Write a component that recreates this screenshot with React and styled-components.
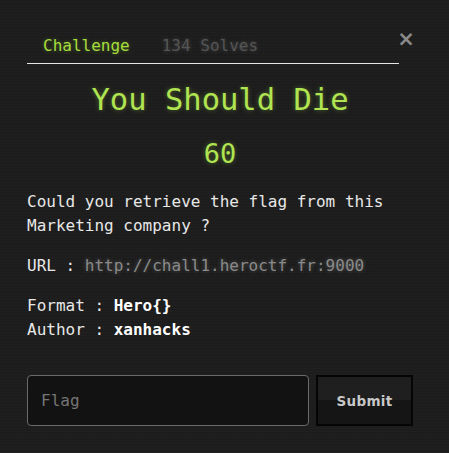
import React from 'react';
import styled, { createGlobalStyle } from 'styled-components';

const GlobalStyle = createGlobalStyle`
  html, body {
    margin: 0;
    padding: 0;
    background-color: #1d1d1d;
    background-image:
      repeating-linear-gradient(0deg, rgba(255, 255, 255, 0.012) 0 1px, transparent 1px 3px),
      repeating-linear-gradient(90deg, rgba(0, 0, 0, 0.05) 0 1px, transparent 1px 3px);
  }

  body {
    font-family: 'DejaVu Sans Mono', monospace;
    color: #e8e8e8;
  }
`;

const challenge = {
  name: 'You Should Die',
  value: 60,
  solves: 134,
  url: 'http://chall1.heroctf.fr:9000',
  format: 'Hero{}',
  author: 'xanhacks',
};

const App = () => {
  return (
    <>
      <GlobalStyle />
      <Modal>
        <Header>
          <Tabs>
            <Tab active>Challenge</Tab>
            <Tab>{challenge.solves} Solves</Tab>
          </Tabs>
          <CloseButton aria-label="Close">×</CloseButton>
        </Header>

        <Title>{challenge.name}</Title>
        <Points>{challenge.value}</Points>

        <Description>
          <p>
            Could you retrieve the flag from this
            <br />
            Marketing company ?
          </p>
          <p>
            URL : <Link>{challenge.url}</Link>
          </p>
          <p>
            Format : <strong>{challenge.format}</strong>
            <br />
            Author : <strong>{challenge.author}</strong>
          </p>
        </Description>

        <FlagForm onSubmit={e => e.preventDefault()}>
          <FlagInput placeholder="Flag" />
          <SubmitButton type="submit">Submit</SubmitButton>
        </FlagForm>
      </Modal>
    </>
  );
};

export default App;

const Modal = styled.div`
  display: flex;
  flex-direction: column;
  width: 386px;
  padding: 34px 36px 0 27px;
`;

const Header = styled.div`
  display: flex;
  align-items: flex-start;
`;

const Tabs = styled.nav`
  display: flex;
  flex: 1;
  padding-bottom: 5px;
  border-bottom: 1px solid #e4e4e4;
`;

const Tab = styled.span`
  padding: 0 16px;
  font-size: 16px;
  line-height: 24px;
  color: ${p => (p.active ? '#a6de3c' : '#555')};
  text-shadow: ${p =>
    p.active ? '0 0 4px rgba(166, 222, 60, 0.35)' : '0 0 4px rgba(120, 120, 120, 0.5)'};
`;

const CloseButton = styled.button`
  display: flex;
  justify-content: center;
  width: 14px;
  height: 18px;
  margin-top: -4px;
  padding: 0;
  border: 0;
  background: none;
  font-family: 'DejaVu Sans', sans-serif;
  font-size: 21px;
  font-weight: bold;
  line-height: 18px;
  color: #8a8a8a;
  cursor: pointer;
`;

const Title = styled.h2`
  margin: 18px 0 0;
  text-align: center;
  font-size: 30.5px;
  font-weight: normal;
  line-height: 36px;
  color: #b0e450;
  text-shadow: 0 0 5px rgba(176, 228, 80, 0.35);
`;

const Points = styled.h4`
  margin: 18px 0 0;
  text-align: center;
  font-size: 27px;
  font-weight: normal;
  line-height: 36px;
  color: #b0e450;
  text-shadow: 0 0 5px rgba(176, 228, 80, 0.35);
`;

const Description = styled.div`
  margin-top: 18px;
  font-size: 16px;
  line-height: 24px;

  p {
    margin: 0 0 16px;
  }

  p:last-child {
    margin-bottom: 0;
  }

  strong {
    color: #fff;
  }
`;

const Link = styled.span`
  color: #8a8a8a;
  text-shadow: 0 0 4px rgba(140, 140, 140, 0.5);
`;

const FlagForm = styled.form`
  display: flex;
  gap: 7px;
  margin-top: 33px;
`;

const FlagInput = styled.input`
  flex: 1;
  min-width: 0;
  height: 51px;
  box-sizing: border-box;
  padding: 0 13px;
  border: 1px solid #6a6a6a;
  border-radius: 4px;
  background: #121212;
  font-family: 'DejaVu Sans Mono', monospace;
  font-size: 16px;
  color: #ddd;
  outline: none;

  ::placeholder {
    color: #676d74;
  }
`;

const SubmitButton = styled.button`
  width: 97px;
  height: 51px;
  box-sizing: border-box;
  border: 2px solid #050505;
  border-radius: 0;
  background: linear-gradient(#1f1f1f 50%, #151515 50%);
  font-family: 'DejaVu Sans', sans-serif;
  font-size: 13.5px;
  font-weight: bold;
  letter-spacing: 0.3px;
  color: #c8c8c8;
  cursor: pointer;
`;
